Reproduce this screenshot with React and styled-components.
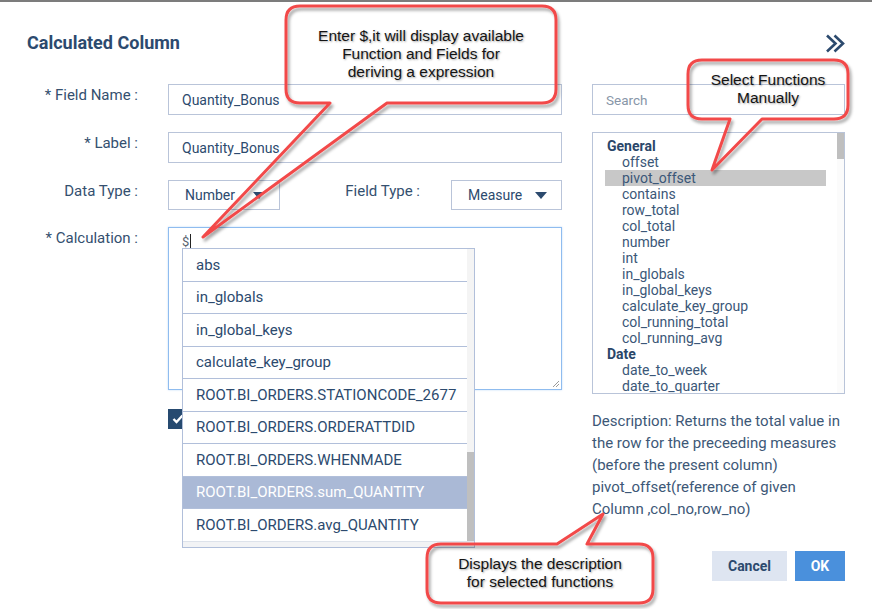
import React from "react";
import styled, { createGlobalStyle } from "styled-components";

const navy = "#2c4a6e";
const line = "#b9c4d9";

const GlobalStyle = createGlobalStyle`
  html, body {
    margin: 0;
    padding: 0;
    background: #fff;
  }
  body {
    font-family: Roboto, "Liberation Sans", Arial, sans-serif;
  }
  * {
    box-sizing: border-box;
  }
`;

const Page = styled.div`
  position: relative;
  width: 872px;
  height: 609px;
  overflow: hidden;
  background: #fff;
`;

const TopEdge = styled.div`
  height: 2px;
  background: #7c7c7c;
`;

const Header = styled.div`
  display: flex;
  justify-content: space-between;
  align-items: center;
  padding: 29px 27px 0;
`;

const Title = styled.h2`
  margin: 0;
  font-size: 18px;
  line-height: 24px;
  font-weight: 700;
  color: ${navy};
`;

const Content = styled.div`
  display: flex;
  padding-top: 29px;
`;

const LeftCol = styled.div`
  width: 562px;
  display: flex;
  flex-direction: column;
  gap: 17px;
`;

const FormRow = styled.div`
  display: flex;
  align-items: flex-start;
`;

const Label = styled.label`
  flex-shrink: 0;
  width: ${(p) => (p.$auto ? "auto" : "138px")};
  margin-right: ${(p) => (p.$auto ? "31px" : "30px")};
  text-align: right;
  font-size: 15px;
  line-height: 22px;
  color: #34506f;
`;

const TextInput = styled.input`
  width: ${(p) => p.$w || 394}px;
  height: 31px;
  border: 1px solid ${line};
  padding: 0 13px;
  font-family: Roboto, sans-serif;
  font-size: 14px;
  color: ${navy};
  outline: none;
  &::placeholder {
    font-size: 13.5px;
    color: #8896a8;
  }
`;

const SelectBox = styled.div`
  width: ${(p) => p.$w}px;
  height: 30px;
  border: 1px solid ${line};
  padding: 0 14px 0 16px;
  display: flex;
  align-items: center;
  justify-content: space-between;
  font-size: 14px;
  color: ${navy};
`;

const Triangle = styled.span`
  width: 0;
  height: 0;
  border-left: 6.5px solid transparent;
  border-right: 6.5px solid transparent;
  border-top: 7px solid ${navy};
`;

const FieldTypeGroup = styled.div`
  margin-left: auto;
  display: flex;
  align-items: flex-start;
`;

const CalcBox = styled.div`
  position: relative;
  width: 394px;
  height: 163px;
  border: 1px solid #8fbcef;
  box-shadow: 0 0 2px #c2dbf8;
  padding: 5px 13px;
  font-size: 13px;
  line-height: 18px;
  color: #5a6470;
`;

const Caret = styled.span`
  display: inline-block;
  width: 1px;
  height: 14px;
  margin-left: 1px;
  vertical-align: -2px;
  background: #222;
`;

const Grip = styled.svg`
  position: absolute;
  right: 1px;
  bottom: 1px;
`;

const Suggest = styled.div`
  position: absolute;
  left: 13px;
  top: 20px;
  width: 293px;
  height: 300px;
  z-index: 5;
  background: #fff;
  border: 1px solid #b1bfda;
  display: grid;
  grid-template-columns: 1fr 7px;
  grid-template-rows: 1fr 6px;
`;

const SuggestList = styled.div`
  overflow: hidden;
`;

const SuggestItem = styled.div`
  height: 32.5px;
  display: flex;
  align-items: center;
  padding-left: 13px;
  border-bottom: 1px solid #b1bfda;
  font-size: 15px;
  white-space: nowrap;
  color: ${(p) => (p.$active ? "#fff" : navy)};
  background: ${(p) => (p.$active ? "#aab9d6" : "#fff")};
`;

const VScroll = styled.div`
  background: #f4f4f4;
  display: flex;
  flex-direction: column;
  padding-top: ${(p) => p.$top}px;
`;

const Thumb = styled.div`
  height: ${(p) => p.$h}px;
  background: #bfbfbf;
`;

const HScroll = styled.div`
  grid-column: 1 / 3;
  background: #f2f3f5;
  border-top: 1px solid #dde2ea;
`;

const CheckRow = styled.div`
  margin-top: 2px;
  padding-left: 168px;
`;

const CheckBox = styled.div`
  width: 20px;
  height: 20px;
  background: #264a70;
  display: flex;
  align-items: center;
  justify-content: center;
`;

const RightCol = styled.div`
  width: 253px;
  margin-left: 30px;
  display: flex;
  flex-direction: column;
`;

const FunctionList = styled.div`
  margin-top: 17px;
  height: 262px;
  border: 1px solid ${line};
  display: grid;
  grid-template-columns: 1fr 7px;
  overflow: hidden;
`;

const ListBody = styled.div`
  padding: 5px 11px 0 12px;
  overflow: hidden;
`;

const ListRow = styled.div`
  height: 16px;
  line-height: 16px;
  font-size: 14px;
  white-space: nowrap;
  padding-left: ${(p) => (p.$group ? 2 : 17)}px;
  font-weight: ${(p) => (p.$group ? 700 : 400)};
  color: ${(p) => (p.$group ? "#2a4669" : "#3b5778")};
  background: ${(p) => (p.$selected ? "#c8c8c8" : "transparent")};
`;

const ListScroll = styled.div`
  background: #fbfbfb;
`;

const Description = styled.p`
  margin: 16px 0 0;
  font-size: 15px;
  line-height: 22px;
  color: #3d5877;
`;

const ButtonRow = styled.div`
  margin-top: 31px;
  display: flex;
  justify-content: flex-end;
  gap: 8px;
`;

const Button = styled.button`
  width: ${(p) => p.$w}px;
  height: 30px;
  border: none;
  padding: 0;
  font-family: Roboto, sans-serif;
  font-size: 14px;
  font-weight: 700;
  color: ${(p) => (p.$primary ? "#fff" : navy)};
  background: ${(p) => (p.$primary ? "#4a90dc" : "#dee5f1")};
`;

const Bubble = styled.div`
  position: absolute;
  left: ${(p) => p.$x}px;
  top: ${(p) => p.$y}px;
  width: ${(p) => p.$w}px;
  height: ${(p) => p.$h}px;
  z-index: 20;
  pointer-events: none;
  display: flex;
  align-items: center;
  justify-content: center;
`;

const BubbleShape = styled.svg`
  position: absolute;
  left: 0;
  top: 0;
  overflow: visible;
`;

const BubbleText = styled.div`
  position: relative;
  top: -1px;
  font-family: "Liberation Sans", Arial, sans-serif;
  font-size: 15.5px;
  line-height: 18px;
  text-align: center;
  color: #141414;
  text-shadow: 1px 1px 2px rgba(0, 0, 0, 0.35);
`;

const suggestions = [
  "abs",
  "in_globals",
  "in_global_keys",
  "calculate_key_group",
  "ROOT.BI_ORDERS.STATIONCODE_2677",
  "ROOT.BI_ORDERS.ORDERATTDID",
  "ROOT.BI_ORDERS.WHENMADE",
  "ROOT.BI_ORDERS.sum_QUANTITY",
  "ROOT.BI_ORDERS.avg_QUANTITY",
];

const functions = [
  { name: "General", group: true },
  { name: "offset" },
  { name: "pivot_offset", selected: true },
  { name: "contains" },
  { name: "row_total" },
  { name: "col_total" },
  { name: "number" },
  { name: "int" },
  { name: "in_globals" },
  { name: "in_global_keys" },
  { name: "calculate_key_group" },
  { name: "col_running_total" },
  { name: "col_running_avg" },
  { name: "Date", group: true },
  { name: "date_to_week" },
  { name: "date_to_quarter" },
];

// outline of a speech bubble, tail given in page coords
const bubblePath = (x, y, w, h, tail) => {
  const r = 14;
  const a = tail.a - x;
  const b = tail.b - x;
  const tx = tail.tx - x;
  const ty = tail.ty - y;
  if (tail.side === "top") {
    return `M${r},0 H${a} L${tx},${ty} L${b},0 H${w - r} Q${w},0 ${w},${r} V${h - r} Q${w},${h} ${w - r},${h} H${r} Q0,${h} 0,${h - r} V${r} Q0,0 ${r},0 Z`;
  }
  return `M${r},0 H${w - r} Q${w},0 ${w},${r} V${h - r} Q${w},${h} ${w - r},${h} H${b} L${tx},${ty} L${a},${h} H${r} Q0,${h} 0,${h - r} V${r} Q0,0 ${r},0 Z`;
};

const Callout = ({ id, x, y, w, h, tail, children }) => (
  <Bubble $x={x} $y={y} $w={w} $h={h}>
    <BubbleShape width={w} height={h}>
      <defs>
        <filter id={id} x="-50%" y="-50%" width="200%" height="200%">
          <feDropShadow dx="2" dy="3" stdDeviation="1.6" floodColor="#000" floodOpacity="0.35" />
        </filter>
      </defs>
      <path
        d={bubblePath(x, y, w, h, tail)}
        fill="none"
        stroke="#f24a4a"
        strokeWidth="3"
        strokeLinejoin="round"
        filter={`url(#${id})`}
      />
    </BubbleShape>
    <BubbleText>{children}</BubbleText>
  </Bubble>
);

const App = () => {
  return (
    <Page>
      <GlobalStyle />
      <TopEdge />
      <Header>
        <Title>Calculated Column</Title>
        <svg width="19" height="19" viewBox="0 0 19 19">
          <path
            d="M1 1.5 L9.5 9.5 L1 17.5 M8.5 1.5 L17 9.5 L8.5 17.5"
            fill="none"
            stroke={navy}
            strokeWidth="2.6"
          />
        </svg>
      </Header>

      <Content>
        <LeftCol>
          <FormRow>
            <Label>* Field Name :</Label>
            <TextInput readOnly value="Quantity_Bonus" />
          </FormRow>
          <FormRow>
            <Label>* Label :</Label>
            <TextInput readOnly value="Quantity_Bonus" />
          </FormRow>
          <FormRow>
            <Label>Data Type :</Label>
            <SelectBox $w={112}>
              <span>Number</span>
              <Triangle />
            </SelectBox>
            <FieldTypeGroup>
              <Label $auto>Field Type :</Label>
              <SelectBox $w={111}>
                <span>Measure</span>
                <Triangle />
              </SelectBox>
            </FieldTypeGroup>
          </FormRow>
          <FormRow>
            <Label>* Calculation :</Label>
            <CalcBox>
              $<Caret />
              <Suggest>
                <SuggestList>
                  {suggestions.map((s, i) => (
                    <SuggestItem key={s} $active={i === 7}>
                      {s}
                    </SuggestItem>
                  ))}
                </SuggestList>
                <VScroll $top={203}>
                  <Thumb $h={89} />
                </VScroll>
                <HScroll />
              </Suggest>
              <Grip width="9" height="9" viewBox="0 0 9 9">
                <path d="M8 2 L2 8 M8 5 L5 8" stroke="#9a9a9a" strokeWidth="1" />
              </Grip>
            </CalcBox>
          </FormRow>
          <CheckRow>
            <CheckBox>
              <svg width="12" height="10" viewBox="0 0 12 10">
                <path d="M1.5 5 L4.5 8 L10.5 1.5" fill="none" stroke="#fff" strokeWidth="2.4" />
              </svg>
            </CheckBox>
          </CheckRow>
        </LeftCol>

        <RightCol>
          <TextInput $w={253} placeholder="Search" />
          <FunctionList>
            <ListBody>
              {functions.map((f) => (
                <ListRow key={f.name} $group={f.group} $selected={f.selected}>
                  {f.name}
                </ListRow>
              ))}
            </ListBody>
            <ListScroll>
              <Thumb $h={26} />
            </ListScroll>
          </FunctionList>
          <Description>
            Description: Returns the total value in
            <br />
            the row for the preceeding measures
            <br />
            (before the present column)
            <br />
            pivot_offset(reference of given
            <br />
            Column ,col_no,row_no)
          </Description>
          <ButtonRow>
            <Button $w={75}>Cancel</Button>
            <Button $w={50} $primary>
              OK
            </Button>
          </ButtonRow>
        </RightCol>
      </Content>

      <Callout
        id="c1"
        x={286}
        y={6}
        w={270}
        h={97}
        tail={{ side: "bottom", a: 330, b: 387, tx: 203, ty: 237 }}
      >
        Enter $,it will display available
        <br />
        Function and Fields for
        <br />
        deriving a expression
      </Callout>
      <Callout
        id="c2"
        x={688}
        y={60}
        w={160}
        h={59}
        tail={{ side: "bottom", a: 730, b: 762, tx: 712, ty: 170 }}
      >
        Select Functions
        <br />
        Manually
      </Callout>
      <Callout
        id="c3"
        x={427}
        y={544}
        w={226}
        h={59}
        tail={{ side: "top", a: 557, b: 587, tx: 603, ty: 514 }}
      >
        Displays the description
        <br />
        for selected functions
      </Callout>
    </Page>
  );
};

export default App;
